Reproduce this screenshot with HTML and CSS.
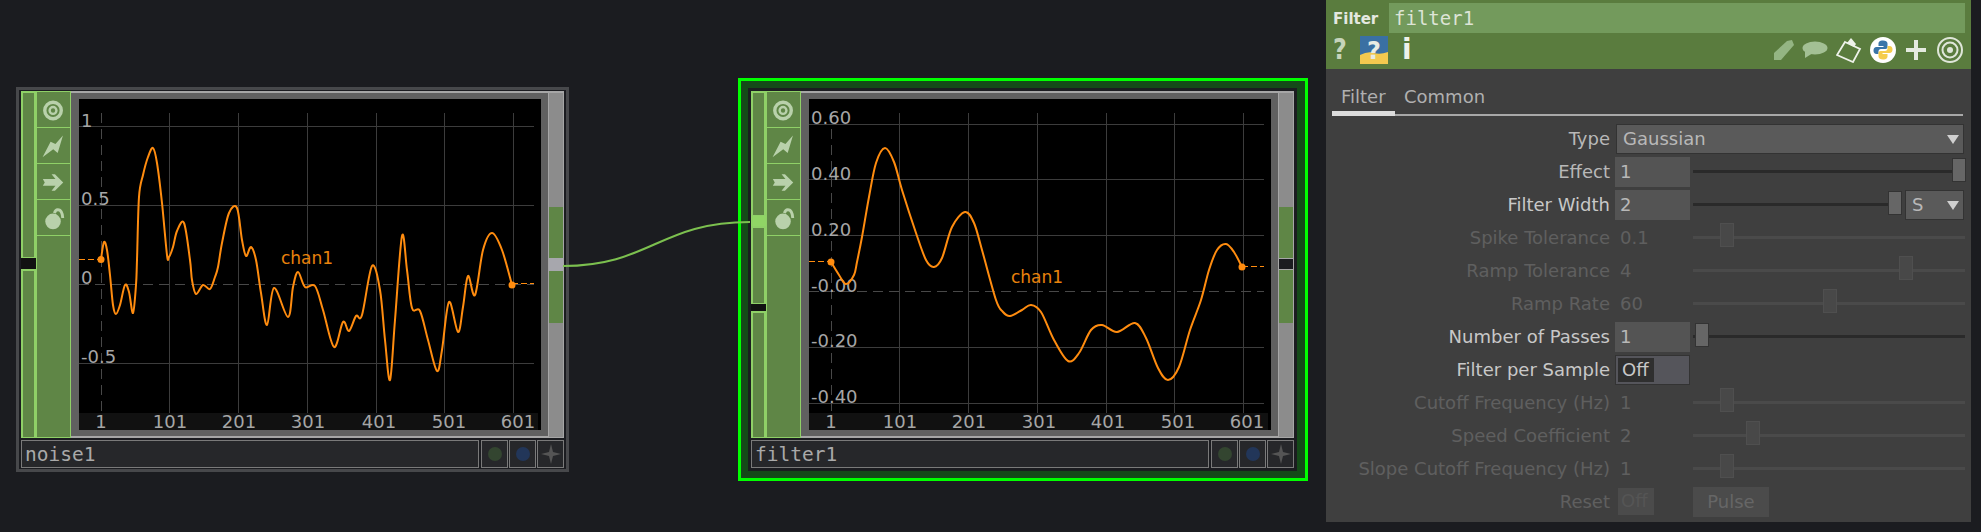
FILE: index.html
```html
<!DOCTYPE html>
<html lang="en">

<head>
    <meta charset="UTF-8">
    <title>Filter CHOP</title>
    <link rel="stylesheet" href="styles.css">
</head>

<body>
    <svg class="defs" width="0" height="0">
        <symbol id="ic-view" viewBox="0 0 35 36">
            <circle cx="16.5" cy="19" r="8.5" fill="none" stroke="currentColor" stroke-width="3.5" />
            <circle cx="16.5" cy="19" r="3.5" fill="none" stroke="currentColor" stroke-width="2.5" />
        </symbol>
        <symbol id="ic-bolt" viewBox="0 0 35 35">
            <path d="M5.7 29.5 14 13.7 19 16 26.7 7.3 21.3 25.3 16.7 21.3Z" fill="currentColor" />
        </symbol>
        <symbol id="ic-arrow" viewBox="0 0 35 36">
            <path d="M6 15.5H19L15 10.5H18.5L27 19 18.5 27.5H15L19 22.5H6L8 19Z" fill="currentColor" />
        </symbol>
        <symbol id="ic-lock" viewBox="0 0 35 36">
            <circle cx="16.5" cy="22" r="8" fill="currentColor" />
            <path d="M18 13.500Q19 9.500 22 10 26 10.500 26.500 18.500" fill="none" stroke="currentColor" stroke-width="3" />
        </symbol>
        <symbol id="ic-star" viewBox="0 0 20 20">
            <path d="M10 0 12 8 20 10 12 12 10 20 8 12 0 10 8 8Z" fill="currentColor" />
        </symbol>
    </svg>

    <svg class="wire" width="1981" height="532">
        <path d="M563 266C650 266 660 222 750 222" />
    </svg>

    <!-- noise1 -->
    <div class="node node-noise">
        <div class="node-body">
            <div class="inputs">
                <div class="in-part in-noise-top"></div>
                <div class="in-notch"></div>
                <div class="in-part in-grow"></div>
            </div>
            <div class="flags">
                <div class="flag"><svg><use href="#ic-view" /></svg></div>
                <div class="flag"><svg><use href="#ic-bolt" /></svg></div>
                <div class="flag"><svg><use href="#ic-arrow" /></svg></div>
                <div class="flag"><svg><use href="#ic-lock" /></svg></div>
            </div>
            <div class="viewer-wrap">
                <svg class="viewer" viewBox="79 99 462 331">
                    <rect class="band" x="79" y="413" width="459" height="17" />
                    <path class="grid" d="M169 113V413M238 113V413M307 113V413M376 113V413M444 113V413M513 113V413M79 126H534M79 205H534M79 363H534" />
                    <path class="grid dash" d="M101 113V413M79 284H534" />
                    <text class="axis" x="81" y="127">1</text>
                    <text class="axis" x="81" y="205">0.5</text>
                    <text class="axis" x="81" y="284">0</text>
                    <text class="axis" x="81" y="363">-0.5</text>
                    <text class="axis mid" x="101" y="428">1</text>
                    <text class="axis mid" x="170" y="428">101</text>
                    <text class="axis mid" x="239" y="428">201</text>
                    <text class="axis mid" x="308" y="428">301</text>
                    <text class="axis mid" x="379" y="428">401</text>
                    <text class="axis mid" x="449" y="428">501</text>
                    <text class="axis mid" x="518" y="428">601</text>
                    <path class="trail" d="M79 259H101M512 283H534" />
                    <path class="curve" id="noiseCurve" />
                    <circle class="dot" cx="101" cy="259.500" r="3.500" />
                    <circle class="dot" cx="512" cy="285" r="3.500" />
                    <text class="chan" x="281" y="264">chan1</text>
                </svg>
            </div>
            <div class="outputs">
                <div class="out-gap"></div>
                <div class="out-part out-a"></div>
                <div class="out-link"></div>
                <div class="out-part out-b"></div>
                <div class="out-gap grow"></div>
            </div>
        </div>
        <div class="node-name">
            <div class="name-box">noise1</div>
            <div class="name-btn"><i class="led led-green"></i></div>
            <div class="name-btn"><i class="led led-blue"></i></div>
            <div class="name-btn"><svg class="star"><use href="#ic-star" /></svg></div>
        </div>
    </div>

    <!-- filter1, selected -->
    <div class="selected">
        <div class="node node-filter">
            <div class="node-body">
                <div class="inputs">
                    <div class="in-part in-filter-a"></div>
                    <div class="in-lit"></div>
                    <div class="in-part in-filter-b"></div>
                    <div class="in-notch in-notch-small"></div>
                    <div class="in-part in-grow"></div>
                </div>
                <div class="flags">
                    <div class="flag"><svg><use href="#ic-view" /></svg></div>
                    <div class="flag"><svg><use href="#ic-bolt" /></svg></div>
                    <div class="flag"><svg><use href="#ic-arrow" /></svg></div>
                    <div class="flag"><svg><use href="#ic-lock" /></svg></div>
                </div>
                <div class="viewer-wrap">
                    <svg class="viewer" viewBox="810 99 462 331">
                        <rect class="band" x="810" y="413" width="459" height="17" />
                        <path class="grid" d="M900 113V413M969 113V413M1038 113V413M1107 113V413M1175 113V413M1244 113V413M810 124H1265M810 179H1265M810 235H1265M810 347H1265M810 403H1265" />
                        <path class="grid dash" d="M832 113V413M810 291H1265" />
                        <text class="axis" x="812" y="124">0.60</text>
                        <text class="axis" x="812" y="180">0.40</text>
                        <text class="axis" x="812" y="236">0.20</text>
                        <text class="axis" x="812" y="292">-0.00</text>
                        <text class="axis" x="812" y="347">-0.20</text>
                        <text class="axis" x="812" y="403">-0.40</text>
                        <text class="axis mid" x="832" y="428">1</text>
                        <text class="axis mid" x="901" y="428">101</text>
                        <text class="axis mid" x="970" y="428">201</text>
                        <text class="axis mid" x="1040" y="428">301</text>
                        <text class="axis mid" x="1109" y="428">401</text>
                        <text class="axis mid" x="1179" y="428">501</text>
                        <text class="axis mid" x="1248" y="428">601</text>
                        <path class="trail" d="M810 261.500H832M1243 266.500H1265" />
                        <path class="curve" id="filterCurve" />
                        <circle class="dot" cx="832" cy="262" r="3.500" />
                        <circle class="dot" cx="1243" cy="267" r="3.500" />
                        <text class="chan" x="1012" y="283">chan1</text>
                    </svg>
                </div>
                <div class="outputs">
                    <div class="out-gap"></div>
                    <div class="out-part out-a"></div>
                    <div class="out-notch"></div>
                    <div class="out-part out-c"></div>
                    <div class="out-gap grow"></div>
                </div>
            </div>
            <div class="node-name">
                <div class="name-box">filter1</div>
                <div class="name-btn"><i class="led led-green"></i></div>
                <div class="name-btn"><i class="led led-blue"></i></div>
                <div class="name-btn"><svg class="star"><use href="#ic-star" /></svg></div>
            </div>
        </div>
    </div>

    <!-- parameter dialog -->
    <div class="panel">
        <div class="panel-head">
            <div class="head-top">
                <span class="op-type">Filter</span>
                <span class="op-name">filter1</span>
            </div>
            <div class="head-icons">
                <span class="q">?</span>
                <svg class="py-help" width="28" height="28" viewBox="0 0 28 28">
                    <rect width="28" height="28" fill="#3a70a3" />
                    <path d="M0 19Q8 15 14 17T28 16V28H0Z" fill="#f3c94f" />
                    <text x="14" y="23" class="py-q">?</text>
                </svg>
                <span class="info">i</span>
                <span class="head-space"></span>
                <svg class="tool tool-pencil" width="24" height="24" viewBox="0 0 24 24">
                    <path d="M2 22V15L15 3 20 2 22 7 9 22Z" fill="#94b583" />
                </svg>
                <svg class="tool" width="26" height="24" viewBox="0 0 26 24">
                    <ellipse cx="13" cy="10" rx="12.500" ry="6.500" fill="#a3c094" />
                    <path d="M3 13V20L11 15Z" fill="#a3c094" />
                </svg>
                <svg class="tool" width="26" height="26" viewBox="0 0 26 26">
                    <path d="M9 5 24 12 17 25 1 18Z" fill="none" stroke="#eef2ea" stroke-width="1.800" />
                    <path d="M11 6 15 1 20 7 18 10Z" fill="#eef2ea" />
                </svg>
                <svg class="tool" width="26" height="26" viewBox="0 0 26 26">
                    <circle cx="13" cy="13" r="13" fill="#fff" />
                    <path d="M13 3.500C9.500 3.500 8.500 5 8.500 6.500V9H13.500V10H6.500C4.500 10 3.500 11.500 3.500 13.500S4.500 17 6.500 17H8.500V14.500C8.500 13 9.500 12 11 12H15.500C16.800 12 17.500 11 17.500 10V6.500C17.500 4.500 15.500 3.500 13 3.500Z" fill="#3a75a8" />
                    <path d="M13 22.500C16.500 22.500 17.500 21 17.500 19.500V17H12.500V16H19.500C21.500 16 22.500 14.500 22.500 12.500S21.500 9 19.500 9H17.500V11.500C17.500 13 16.500 14 15 14H10.500C9.200 14 8.500 15 8.500 16V19.500C8.500 21.500 10.500 22.500 13 22.500Z" fill="#f5cd4d" />
                </svg>
                <svg class="tool" width="24" height="24" viewBox="0 0 24 24">
                    <path d="M10 2H14V10H22V14H14V22H10V14H2V10H10Z" fill="#e4eadf" />
                </svg>
                <svg class="tool" width="28" height="28" viewBox="0 0 28 28">
                    <circle cx="14" cy="14" r="12" fill="none" stroke="#dfe6d9" stroke-width="2" />
                    <circle cx="14" cy="14" r="7.500" fill="none" stroke="#dfe6d9" stroke-width="2" />
                    <circle cx="14" cy="14" r="3" fill="#dfe6d9" />
                </svg>
            </div>
        </div>

        <div class="tabs">
            <span class="tab active">Filter</span>
            <span class="tab">Common</span>
        </div>

        <div class="params">
            <div class="row">
                <label>Type</label>
                <div class="menu menu-wide">Gaussian<i class="caret"></i></div>
            </div>
            <div class="row">
                <label>Effect</label>
                <div class="field">1</div>
                <div class="slider"><i class="handle" style="left:259px"></i></div>
            </div>
            <div class="row">
                <label class="bright">Filter Width</label>
                <div class="field">2</div>
                <div class="slider slider-short"><i class="handle" style="left:195px"></i></div>
                <div class="menu menu-small">S<i class="caret"></i></div>
            </div>
            <div class="row off">
                <label>Spike Tolerance</label>
                <div class="field">0.1</div>
                <div class="slider"><i class="handle" style="left:27px"></i></div>
            </div>
            <div class="row off">
                <label>Ramp Tolerance</label>
                <div class="field">4</div>
                <div class="slider"><i class="handle" style="left:206px"></i></div>
            </div>
            <div class="row off">
                <label>Ramp Rate</label>
                <div class="field">60</div>
                <div class="slider"><i class="handle" style="left:130px"></i></div>
            </div>
            <div class="row">
                <label class="bright">Number of Passes</label>
                <div class="field">1</div>
                <div class="slider"><i class="handle" style="left:2px"></i></div>
            </div>
            <div class="row">
                <label class="bright">Filter per Sample</label>
                <div class="toggle"><span>Off</span></div>
            </div>
            <div class="row off">
                <label>Cutoff Frequency (Hz)</label>
                <div class="field">1</div>
                <div class="slider"><i class="handle" style="left:27px"></i></div>
            </div>
            <div class="row off">
                <label>Speed Coefficient</label>
                <div class="field">2</div>
                <div class="slider"><i class="handle" style="left:53px"></i></div>
            </div>
            <div class="row off">
                <label>Slope Cutoff Frequency (Hz)</label>
                <div class="field">1</div>
                <div class="slider"><i class="handle" style="left:27px"></i></div>
            </div>
            <div class="row off">
                <label>Reset</label>
                <div class="reset"><span>Off</span></div>
                <div class="pulse">Pulse</div>
            </div>
        </div>
    </div>

    <script src="charts.js"></script>
</body>

</html>
```

FILE: styles.css
```css
* {
    box-sizing: border-box;
}

html,
body {
    margin: 0;
    height: 100%;
}

body {
    position: relative;
    width: 1981px;
    height: 532px;
    overflow: hidden;
    background-color: #1b1c20;
    font-family: "DejaVu Sans", sans-serif;
}

.defs {
    position: absolute;
}

.wire {
    position: absolute;
    left: 0;
    top: 0;
    z-index: 2;
}

.wire path {
    fill: none;
    stroke: #7cc04f;
    stroke-width: 2;
}

/* nodes */
.node {
    display: flex;
    flex-direction: column;
    width: 553px;
    height: 385px;
    padding: 1px 2px 1px 2px;
    background-color: #1b1c20;
    border: 3px solid #47484b;
}

.node-noise {
    position: absolute;
    left: 16px;
    top: 87px;
}

.selected {
    position: absolute;
    left: 738px;
    top: 78px;
    width: 570px;
    height: 403px;
    padding: 7px 8px 7px 7px;
    background-color: #144a18;
    border: 3px solid #00ff00;
}

.node-filter {
    width: 549px;
    height: 383px;
    padding: 0;
    border-color: #1b1c20;
}

.node-body {
    display: flex;
    height: 347px;
}

.inputs {
    display: flex;
    flex-direction: column;
    width: 15px;
}

.in-part {
    background-color: #5f8646;
    border: 2px solid #8fd067;
    border-bottom-width: 1px;
}

.in-noise-top {
    height: 167px;
}

.in-grow {
    flex: 1;
}

.in-notch {
    height: 11px;
    background-color: #111;
}

.in-notch-small {
    height: 7px;
}

.in-filter-a {
    height: 125px;
}

.in-lit {
    height: 10px;
    background-color: #90d565;
}

.in-filter-b {
    height: 78px;
}

.flags {
    display: flex;
    flex-direction: column;
    width: 35px;
    background-color: #5f8646;
    border: 1px solid #8fd067;
}

.flag {
    height: 36px;
    color: #b9d1ab;
    border-bottom: 1px solid #8fd067;
}

.flag svg {
    display: block;
    width: 34px;
    height: 35px;
}

.viewer-wrap {
    display: flex;
    width: 477px;
    padding: 6px 6px 7px 8px;
    background-color: #606060;
    border-top: 2px solid #a6a6a6;
    border-bottom: 2px solid #a6a6a6;
}

.viewer {
    display: block;
    width: 462px;
    height: 331px;
    overflow: visible;
    background-color: #000;
}

.band {
    fill: #111;
}

.grid {
    fill: none;
    stroke: #3c3c3c;
    stroke-width: 1;
    shape-rendering: crispEdges;
}

.dash {
    stroke: #484848;
    stroke-dasharray: 10 6;
}

.axis {
    font-size: 18px;
    fill: #a6a6a6;
}

.mid {
    text-anchor: middle;
}

.trail {
    fill: none;
    stroke: #ff8c0f;
    stroke-width: 1;
    stroke-dasharray: 6 3;
    shape-rendering: crispEdges;
}

.curve {
    fill: none;
    stroke: #ff8c0f;
    stroke-width: 2;
    stroke-linejoin: round;
}

.dot {
    fill: #ff8c0f;
}

.chan {
    font-size: 17px;
    fill: #e8820c;
}

.outputs {
    display: flex;
    flex-direction: column;
    width: 16px;
    background-color: #8c8c8c;
    border: 1px solid #a6a6a6;
    border-top-width: 2px;
}

.out-gap {
    height: 114px;
}

.grow {
    flex: 1;
    height: auto;
}

.out-part {
    background-color: #5f8646;
}

.out-a {
    height: 51px;
}

.out-b {
    height: 52px;
}

.out-c {
    height: 54px;
    border-top: 1px solid #a6a6a6;
}

.out-link {
    height: 13px;
    background-color: #a7a7ad;
}

.out-notch {
    height: 11px;
    background-color: #1b1c20;
    border-top: 1px solid #a6a6a6;
}

.node-name {
    display: flex;
    height: 28px;
    margin-top: 2px;
    gap: 1px;
}

.name-box {
    flex: 1;
    margin-right: 1px;
    padding-left: 3px;
    font-family: "DejaVu Sans Mono", monospace;
    font-size: 19.500px;
    line-height: 27px;
    color: #a9a9a9;
    background-color: #26272a;
    border: 1px solid #7a7a7a;
}

.name-btn {
    display: flex;
    align-items: center;
    justify-content: center;
    width: 27px;
    background-color: #26272a;
    border: 1px solid #7a7a7a;
}

.led {
    width: 14px;
    height: 14px;
    border-radius: 50%;
}

.led-green {
    background-color: #334530;
}

.led-blue {
    background-color: #223659;
}

.star {
    width: 20px;
    height: 20px;
    color: #555;
}

/* parameter dialog */
.panel {
    position: absolute;
    left: 1326px;
    top: 0;
    width: 645px;
    height: 522px;
    background-color: #3f3f3f;
}

.panel-head {
    height: 69px;
    padding-top: 3px;
    background-color: #5a7c3e;
}

.head-top {
    display: flex;
    align-items: center;
    height: 30px;
}

.op-type {
    width: 63px;
    padding: 2px 0 0 7px;
    font-size: 15px;
    font-weight: bold;
    color: #e4e8e0;
}

.op-name {
    width: 576px;
    height: 30px;
    padding-left: 5px;
    font-family: "DejaVu Sans Mono", monospace;
    font-size: 19px;
    line-height: 31px;
    color: #dde4d6;
    background-color: #739a5c;
}

.head-icons {
    display: flex;
    align-items: center;
    height: 32px;
    padding: 2px 7px 0 7px;
}

.q {
    width: 27px;
    font-size: 28px;
    line-height: 30px;
    color: #c6d4bb;
    font-weight: bold;
    transform: scaleX(0.85);
    transform-origin: left;
}

.py-help {
    margin-right: 14px;
    overflow: visible;
}

.py-q {
    font-size: 24px;
    font-weight: bold;
    text-anchor: middle;
    fill: #e8ece4;
}

.info {
    font-size: 28px;
    line-height: 30px;
    font-weight: bold;
    color: #eef2ea;
}

.head-space {
    flex: 1;
}

.tool {
    margin-left: 8px;
}

.tool-pencil {
    position: relative;
    left: 2px;
}

.tabs {
    display: flex;
    align-items: flex-end;
    height: 47px;
    margin: 0 8px 0 6px;
    border-bottom: 2px solid #a8a8a8;
}

.tab {
    height: 34px;
    padding: 0 9px;
    font-size: 18px;
    line-height: 33px;
    color: #b0b0b0;
}

.tab.active {
    width: 63px;
    margin-bottom: -2px;
    height: 36px;
    border-bottom: 5px solid #dcdcdc;
}

.params {
    padding-top: 6px;
}

.row {
    display: flex;
    align-items: center;
    height: 33px;
    font-size: 18px;
    color: #b8b8b8;
}

.row label {
    width: 284px;
    text-align: right;
}

.bright {
    color: #c8c8c8;
}

.field {
    width: 75px;
    height: 30px;
    margin-left: 5px;
    padding-left: 5px;
    line-height: 29px;
    background-color: #545454;
}

.off,
.off .bright {
    color: #5f5f5f;
}

.off .field {
    background-color: transparent;
}

.slider {
    position: relative;
    width: 272px;
    height: 3px;
    margin-left: 3px;
    background-color: #2a2a2a;
}

.slider-short {
    width: 209px;
}

.off .slider {
    background-color: #4a4a4a;
}

.handle {
    position: absolute;
    top: -12px;
    width: 14px;
    height: 24px;
    background-color: #666;
    border: 1px solid #333;
}

.off .handle {
    top: -13px;
    background-color: #484848;
    border-color: #4f4f4f;
}

.menu {
    position: relative;
    height: 30px;
    padding-left: 6px;
    line-height: 28px;
    background-color: #5a5a5a;
    border: 1px solid #333;
}

.menu-wide {
    width: 348px;
    margin-left: 6px;
}

.menu-small {
    width: 59px;
    margin-left: 3px;
}

.caret {
    position: absolute;
    right: 4px;
    top: 10px;
    border-top: 9px solid #d0d0d0;
    border-left: 6px solid transparent;
    border-right: 6px solid transparent;
}

.toggle {
    width: 75px;
    height: 30px;
    margin-left: 5px;
    padding: 2px 0 2px 2px;
    background-color: #55555b;
    border: 1px solid #333;
}

.toggle span {
    display: block;
    width: 36px;
    height: 24px;
    padding-left: 4px;
    line-height: 24px;
    color: #c8c8c8;
    background-color: #2f2f2f;
}

.reset {
    width: 36px;
    height: 27px;
    margin-left: 8px;
    padding-left: 3px;
    line-height: 26px;
    color: #555;
    background-color: #4b4b4b;
}

.pulse {
    width: 76px;
    height: 30px;
    margin-left: 39px;
    line-height: 29px;
    text-align: center;
    background-color: #4b4b4b;
    color: #666;
}
```

FILE: charts.js
```js
// channel samples traced as page x/y, one list per viewer
const noisePoints = [
    [101, 259], [104, 242], [107, 250], [110, 275], [113, 305], [116, 314], [120, 305], [125, 285], [129, 292], [133, 313],
    [136, 285], [137, 260], [139, 197], [143, 175], [148, 157], [153, 148], [157, 163], [162, 203], [167, 255], [169, 257],
    [173, 247], [177, 231], [184, 223], [190, 260], [192, 280], [196, 294], [203, 285], [210, 289], [215, 277], [218, 267],
    [222, 243], [229, 213], [237, 208], [242, 240], [246, 256], [251, 247], [256, 260], [261, 293], [267, 325], [274, 288],
    [288, 317], [293, 287], [298, 272], [305, 287], [315, 286], [323, 310], [334, 347], [343, 322], [349, 331], [356, 316],
    [362, 315], [372, 266], [380, 290], [385, 340], [390, 380], [395, 320], [402, 236], [407, 270], [412, 308], [420, 311],
    [428, 340], [437, 371], [442, 350], [449, 302], [458, 332], [463, 307], [468, 276], [475, 295], [483, 250], [492, 233],
    [502, 250], [512, 285]
];

const filterPoints = [
    [832, 262], [840, 275], [847, 284], [855, 275], [858, 262], [863, 237], [870, 197], [877, 163], [886, 148], [895, 162],
    [903, 190], [917, 233], [927, 260], [935, 267], [943, 258], [953, 227], [966, 212], [975, 223], [983, 250], [997, 300],
    [1004, 312], [1011, 316], [1023, 310], [1032, 305], [1042, 312], [1055, 340], [1069, 361], [1080, 353], [1092, 330], [1103, 325],
    [1118, 332], [1136, 323], [1147, 338], [1159, 368], [1169, 380], [1180, 367], [1191, 330], [1202, 300], [1210, 270], [1218, 250],
    [1227, 244], [1235, 252], [1243, 267]
];

// catmull-rom through the samples
function smoothPath(pts) {
    let d = `M${pts[0][0]} ${pts[0][1]}`;
    for (let i = 0; i < pts.length - 1; i++) {
        const p0 = pts[i - 1] || pts[i];
        const p1 = pts[i];
        const p2 = pts[i + 1];
        const p3 = pts[i + 2] || p2;
        const c1x = p1[0] + (p2[0] - p0[0]) / 6;
        const c1y = p1[1] + (p2[1] - p0[1]) / 6;
        const c2x = p2[0] - (p3[0] - p1[0]) / 6;
        const c2y = p2[1] - (p3[1] - p1[1]) / 6;
        d += `C${c1x} ${c1y} ${c2x} ${c2y} ${p2[0]} ${p2[1]}`;
    }
    return d;
}

document.getElementById('noiseCurve').setAttribute('d', smoothPath(noisePoints));
document.getElementById('filterCurve').setAttribute('d', smoothPath(filterPoints));
```
